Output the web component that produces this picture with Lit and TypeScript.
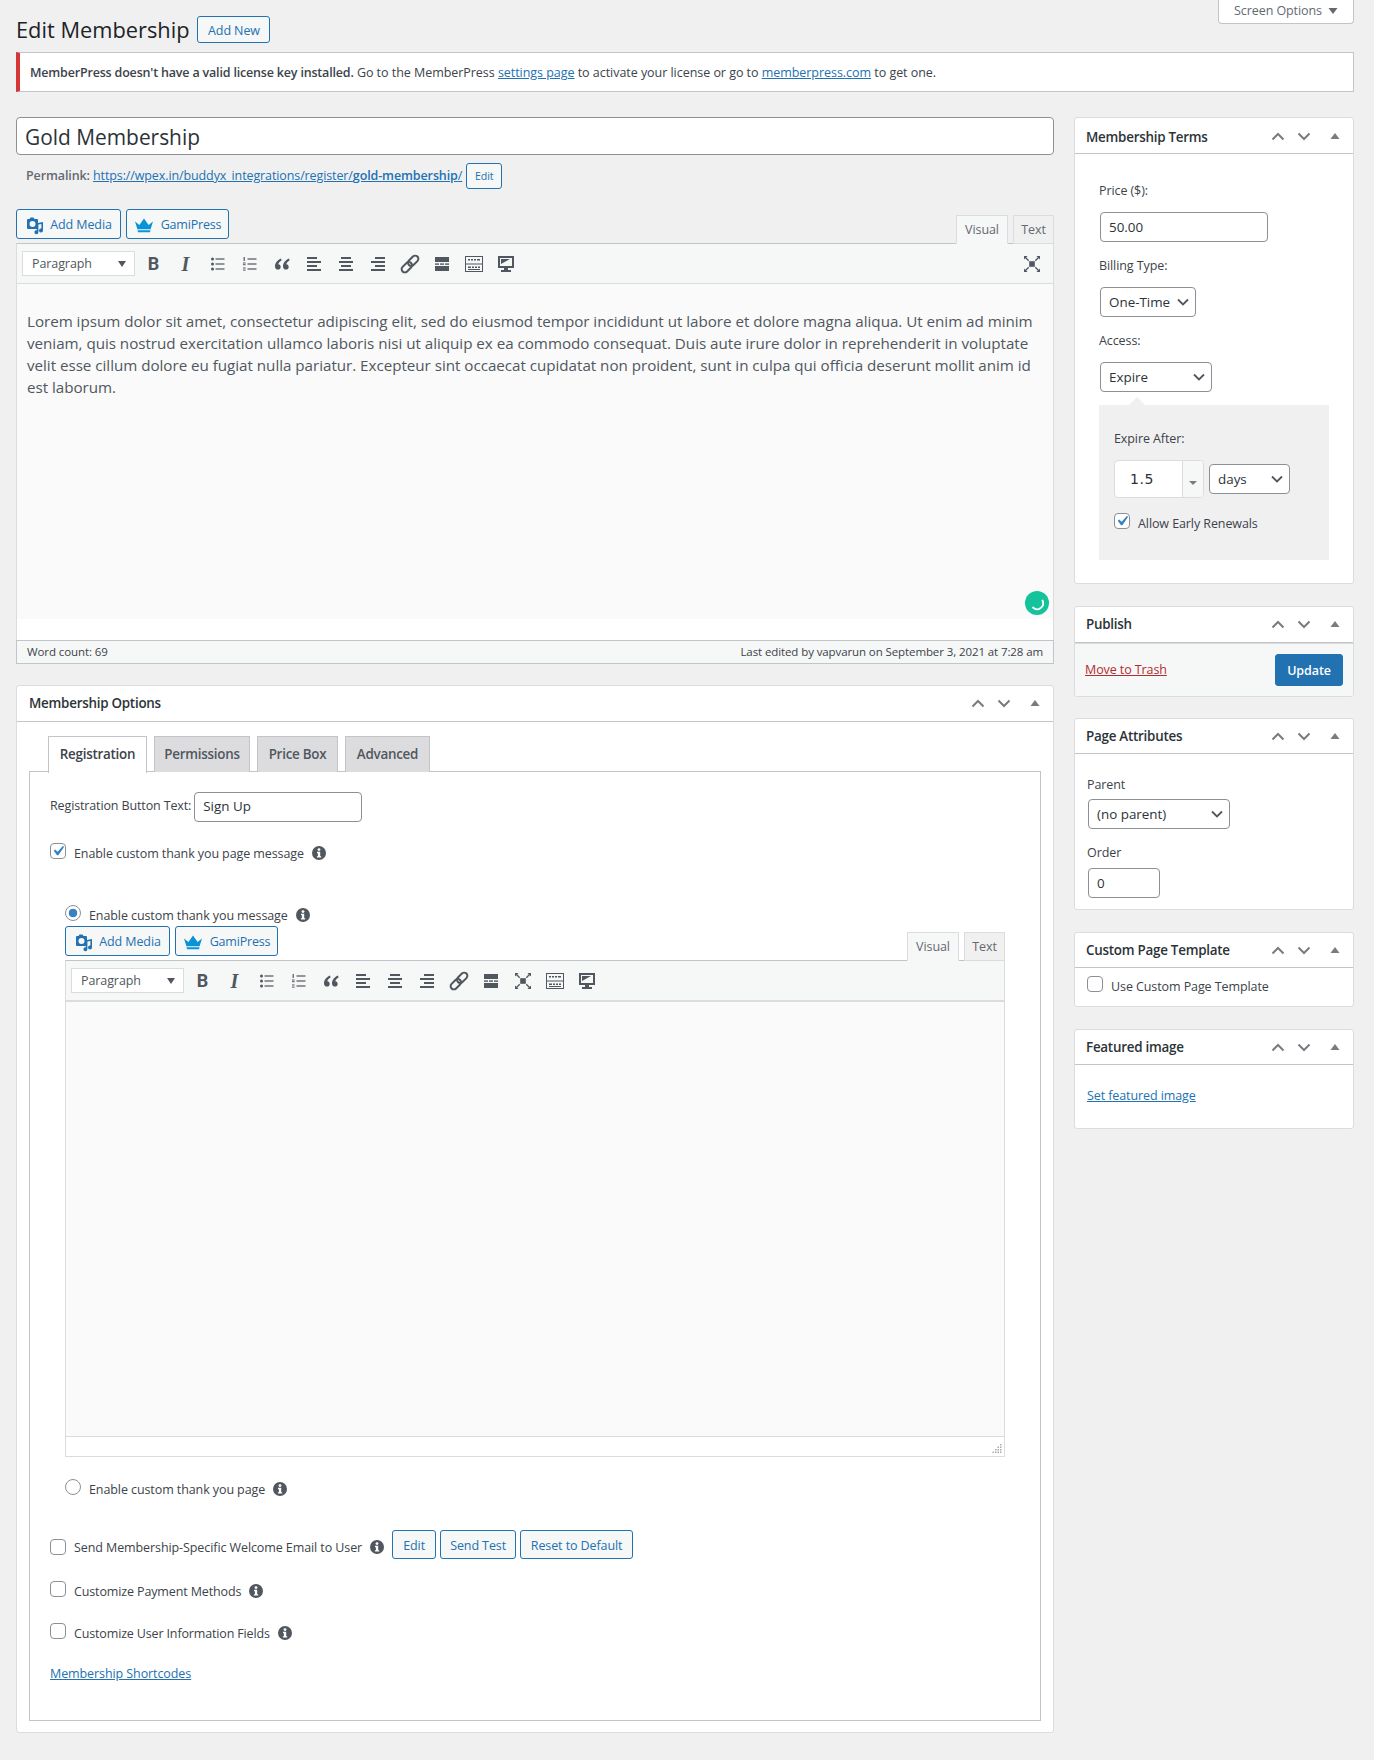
import { LitElement, html, css, svg } from "lit";
import { customElement } from "lit/decorators.js";

const LOREM =
  "Lorem ipsum dolor sit amet, consectetur adipiscing elit, sed do eiusmod tempor incididunt ut labore et dolore magna aliqua. Ut enim ad minim veniam, quis nostrud exercitation ullamco laboris nisi ut aliquip ex ea commodo consequat. Duis aute irure dolor in reprehenderit in voluptate velit esse cillum dolore eu fugiat nulla pariatur. Excepteur sint occaecat cupidatat non proident, sunt in culpa qui officia deserunt mollit anim id est laborum.";

const ic = (body: unknown, size = 20) =>
  html`<svg class="ic" width=${size} height=${size} viewBox="0 0 20 20" fill="currentColor" aria-hidden="true">${body}</svg>`;

const lines = (rows: [number, number, number][]) =>
  rows.map(([x, y, w]) => svg`<rect x=${x} y=${y} width=${w} height="2"></rect>`);

const ICONS: Record<string, unknown> = {
  bold: html`<span class="glyph b">B</span>`,
  italic: html`<span class="glyph i">I</span>`,
  ul: ic(svg`<circle cx="4.5" cy="5" r="1.5"></circle><circle cx="4.5" cy="10" r="1.5"></circle><circle cx="4.5" cy="15" r="1.5"></circle>
    <rect x="7.5" y="4.4" width="9" height="1.2"></rect><rect x="7.5" y="9.4" width="9" height="1.2"></rect><rect x="7.5" y="14.4" width="9" height="1.2"></rect>`),
  ol: ic(svg`<rect x="3.6" y="3" width="1.2" height="4"></rect><rect x="3" y="8.5" width="2.6" height="1"></rect><rect x="3" y="10.2" width="2.6" height="1"></rect><rect x="3" y="13.5" width="2.6" height="1"></rect><rect x="3" y="15.6" width="2.6" height="1"></rect>
    <rect x="7.5" y="4.4" width="9" height="1.2"></rect><rect x="7.5" y="9.4" width="9" height="1.2"></rect><rect x="7.5" y="14.4" width="9" height="1.2"></rect>`),
  quote: ic(svg`<path d="M9 4.6C5.8 6 3 8.9 3 12.4c0 2 1.3 3.2 2.9 3.2s2.8-1.2 2.8-2.7c0-1.5-1-2.6-2.4-2.7.2-1.4 1.5-2.8 3.3-3.8Z"></path><path transform="translate(8 0)" d="M9 4.6C5.8 6 3 8.9 3 12.4c0 2 1.3 3.2 2.9 3.2s2.8-1.2 2.8-2.7c0-1.5-1-2.6-2.4-2.7.2-1.4 1.5-2.8 3.3-3.8Z"></path>`),
  left: ic(lines([[3, 3, 10], [3, 7, 14], [3, 11, 10], [3, 15, 14]])),
  center: ic(lines([[5, 3, 10], [3, 7, 14], [5, 11, 10], [3, 15, 14]])),
  right: ic(lines([[7, 3, 10], [3, 7, 14], [7, 11, 10], [3, 15, 14]])),
  link: ic(svg`<g transform="rotate(-45 10 10)" fill="none" stroke="currentColor" stroke-width="2"><rect x="-0.5" y="6.8" width="12" height="6.4" rx="3.2"></rect><rect x="8.5" y="6.8" width="12" height="6.4" rx="3.2"></rect></g>`),
  more: ic(svg`<rect x="3" y="3" width="14" height="5"></rect><rect x="3" y="9.4" width="4" height="1.4"></rect><rect x="8" y="9.4" width="4" height="1.4"></rect><rect x="13" y="9.4" width="4" height="1.4"></rect><rect x="3" y="12" width="14" height="5"></rect>`),
  full: ic(svg`<rect x="7.2" y="7.2" width="5.6" height="5.6"></rect>
    <path d="M2 2h3.6L2 5.6ZM18 2v3.6L14.4 2ZM2 18v-3.6L5.6 18ZM18 18h-3.6l3.6-3.6Z"></path>
    <path d="M3.5 3.5l3.2 3.2M16.5 3.5l-3.2 3.2M3.5 16.5l3.2-3.2M16.5 16.5l-3.2-3.2" stroke="currentColor" stroke-width="1.3" fill="none"></path>`),
  kitchen: ic(svg`<path fill-rule="evenodd" d="M1 2h18v16H1ZM2 3v6.5h16V3Zm0 7.5V17h16v-6.5Z"></path>
    <path d="M4 5h2v1.5H4Zm3 0h2v1.5H7Zm3 0h2v1.5h-2Zm3 0h3v1.5h-3ZM4 12.5h3V14H4Zm4 0h2V14H8Zm3 0h2V14h-2Zm3 0h2V14h-2ZM4 15h12v1H4Z"></path>`),
  dfw: ic(svg`<path fill-rule="evenodd" d="M2 2h16v12h-6v2h3v2H5v-2h3v-2H2Zm2 2v8h12V4Zm1 1h9L5 10Z"></path>`),
};

const MEDIA_ICON = ic(svg`<path fill-rule="evenodd" d="M5.5 2.5h3L9.5 4H12a1 1 0 0 1 1 1v8a1 1 0 0 1-1 1H3a1 1 0 0 1-1-1V5a1 1 0 0 1 1-1h1.5ZM7.5 6a3 3 0 1 0 0 6 3 3 0 0 0 0-6Z"></path>
  <path d="M18 7v8.5a2 2 0 1 1-1.6-2V9l-3 .6v7.6a2 2 0 1 1-1.6-2V8.2Z"></path>`, 20);

const CROWN_ICON = html`<svg class="ic crown" width="20" height="16" viewBox="0 0 20 16" fill="currentColor" aria-hidden="true">
  <path d="M1 4.5l4.4 3.6L10 1.5l4.6 6.6L19 4.5l-2.4 7.7H3.4Z"></path><path d="M3.4 13.2h13.2l-.7 2H4.1Z"></path></svg>`;

const INFO = html`<svg class="info" width="14" height="14" viewBox="0 0 14 14" aria-hidden="true">
  <circle cx="7" cy="7" r="7" fill="#50575e"></circle><circle cx="7" cy="3.6" r="1.4" fill="#fff"></circle><path d="M5 5.8h3.2v4.4H9.2V11.6H4.9v-1.4H5.9V7.2H5Z" fill="#fff"></path></svg>`;

const HEAD_CTRLS = html`<span class="ctrls">
  <svg width="14" height="9" viewBox="0 0 14 9"><path d="M1.5 7.5 7 2l5.5 5.5" fill="none" stroke="#787c82" stroke-width="2"></path></svg>
  <svg width="14" height="9" viewBox="0 0 14 9"><path d="M1.5 1.5 7 7l5.5-5.5" fill="none" stroke="#787c82" stroke-width="2"></path></svg>
  <svg class="tri" width="10" height="6" viewBox="0 0 10 6"><path d="M5 0l4.5 6H.5Z" fill="#787c82"></path></svg>
</span>`;

@customElement("app-root")
export class AppRoot extends LitElement {
  static styles = css`
    :host {
      display: block;
      min-height: 1760px;
      background: #f0f0f1;
      color: #3c434a;
      font-family: "Open Sans", "Noto Sans", sans-serif;
      font-size: 12.5px;
      letter-spacing: -0.09px;
      line-height: 20px;
    }
    * { box-sizing: border-box; }
    a { color: #2271b1; text-decoration: underline; }
    .wrap { padding: 0 20px 0 16px; }

    .screen-links { display: flex; justify-content: flex-end; height: 0; }
    .screen-tab {
      width: 136px; height: 24px; display: flex; align-items: center; justify-content: center; gap: 6px;
      background: #fff; border: 1px solid #c3c4c7; border-top: 0; border-radius: 0 0 4px 4px; color: #646970;
      padding-bottom: 2px; flex: none;
    }
    .screen-tab svg { color: #646970; }

    .page-head { display: flex; align-items: center; padding-top: 16px; height: 43px; }
    h1 { margin: 0; font-size: 21.8px; font-weight: 400; color: #1d2327; line-height: 27px; letter-spacing: 0; }
    .btn {
      display: inline-flex; align-items: center; justify-content: center; flex: none;
      height: 30px; border: 1px solid #2271b1; border-radius: 3px; color: #2271b1; background: #f6f7f7;
      padding: 1px 0 0; text-decoration: none;
    }
    .add-new { width: 73px; height: 27px; margin-left: 8px; font-weight: 500; background: #f6f7f7; padding-top: 2px; }
    .notice {
      margin-top: 9px; height: 40px; background: #fff; border: 1px solid #c3c4c7; border-left: 4px solid #d63638;
      padding: 1px 0 0 10px; display: flex; align-items: center; white-space: pre; letter-spacing: -0.04px;
    }
    .notice b { font-weight: 600; letter-spacing: -0.18px; }

    .columns { display: grid; grid-template-columns: 1038px 280px; column-gap: 20px; margin-top: 25px; align-items: start; }

    .title {
      display: block; width: 100%; height: 38px; border: 1px solid #8c8f94; border-radius: 4px; background: #fff;
      font: 400 20.9px "Open Sans", sans-serif; letter-spacing: 0; color: #2c3338; padding: 2px 8px 0;
    }
    .permalink { display: flex; align-items: center; height: 26px; margin-top: 8px; padding-left: 10px; gap: 4px; color: #646970; letter-spacing: -0.11px; }
    .permalink b { font-weight: 600; }
    .permalink a b { color: #2271b1; }
    .small-btn { width: 36px; height: 26px; font-size: 10.6px; padding-top: 0; }

    .ed-tools { display: flex; align-items: flex-start; gap: 5px; height: 34px; }
    .media-btn { height: 30px; gap: 5px; }
    .media-btn.m { width: 105px; }
    .media-btn.g { width: 103px; gap: 7px; letter-spacing: -0.2px; }
    .crown { color: #0a93d7; }
    .ed-tabs { margin-left: auto; display: flex; gap: 5px; align-self: flex-end; height: 29px; position: relative; top: 1px; }
    .ed-tab { height: 29px; border: 1px solid #dcdcde; background: #f0f0f1; color: #646970; display: flex; align-items: center; justify-content: center; }
    .ed-tab.on { background: #f6f7f7; border-bottom-color: #f6f7f7; }
    .ed-tab.v { width: 52px; } .ed-tab.t { width: 41px; }

    .toolbar {
      display: flex; align-items: center; height: 41px; background: #f6f7f7; padding: 0 5px;
      border: 1px solid #dcdcde; border-top-color: #c3c4c7; border-bottom-color: #dcdcde;
    }
    .format {
      width: 113px; height: 25px; border: 1px solid #dcdcde; background: #fff; margin-right: 2.5px; display: flex;
      align-items: center; padding: 1px 8px 0 9px; justify-content: space-between; color: #50575e; flex: none;
    }
    .format i { width: 0; height: 0; border: 4.5px solid transparent; border-top: 6px solid #50575e; border-bottom: 0; }
    .cell { width: 32px; height: 32px; flex: none; display: flex; align-items: center; justify-content: center; color: #50575e; }
    .cell.end { margin-left: auto; }
    .glyph { font-size: 18px; line-height: 20px; letter-spacing: 0; }
    .glyph.b { font-family: Roboto, sans-serif; font-weight: 700; }
    .glyph.i { font-family: "Liberation Serif", serif; font-style: italic; font-weight: 700; font-size: 20px; }

    .content {
      height: 356px; background: #fff; border: 1px solid #dcdcde; border-width: 0 1px;
      font-size: 15.2px; line-height: 22px; color: #50575e; letter-spacing: -0.03px; position: relative;
    }
    .frame { height: 335px; background: #fafafa; padding: 26px 9px 0 10px; }
    .content p { margin: 0; }
    .grammarly { position: absolute; right: 4px; bottom: 25px; }
    .status {
      height: 24px; background: #f6f7f7; border: 1px solid #c3c4c7; display: flex;
      justify-content: space-between; align-items: center; padding: 0 10px 0 10px; font-size: 11.5px; letter-spacing: -0.1px;
    }

    .box { background: #fff; border: 1px solid #dcdcde; border-radius: 3px; }
    .box-head {
      display: flex; align-items: center; justify-content: space-between; height: 35px; padding: 0 12px 0 11px;
      border-bottom: 1px solid #c3c4c7; font-size: 13.4px; font-weight: 600; color: #2c3338; letter-spacing: -0.25px;
    }
    .ctrls { display: inline-flex; align-items: center; }
    .ctrls svg { margin-right: 12px; }
    .ctrls .tri { margin: -1px 1px 0 7px; }

    .options { margin-top: 21px; height: 1048px; }
    .options .box-head { height: 36px; padding: 0 12px 2px; }
    .options .ctrls { position: relative; top: 1px; }
    .opt-body { padding: 14px 12px 0 12px; }
    .tabs { display: flex; gap: 7px; padding-left: 19px; height: 36px; position: relative; z-index: 1; }
    .tab {
      width: 99px; height: 36px; border: 1px solid #c3c4c7; border-bottom: 0; background: #dcdcde; color: #50575e;
      display: flex; align-items: center; justify-content: center; padding-bottom: 2px; font-size: 13.4px; font-weight: 600; letter-spacing: -0.25px;
    }
    .tab.on { background: #fff; color: #3c434a; height: 37px; padding-bottom: 3px; }
    .panel { height: 950px; border: 1px solid #c3c4c7; padding: 20px 20px 0 20px; margin-top: -1px; }
    .reg-row { display: flex; align-items: center; gap: 3px; height: 30px; letter-spacing: -0.13px; }
    .reg-row label { position: relative; top: -1px; }
    .text {
      height: 30px; border: 1px solid #8c8f94; border-radius: 4px; background: #fff; padding: 0 8px 1px;
      font: 400 13.4px "Open Sans", sans-serif; letter-spacing: 0; color: #2c3338;
    }
    .reg-row .text { width: 168px; padding-bottom: 3px; }

    .check { display: flex; align-items: flex-start; height: 20px; gap: 8px; }
    .check label { line-height: 20px; margin-top: 1px; }
    .check .info { margin: 3px 0 0 0; flex: none; }
    .cb, .rd {
      appearance: none; width: 16px; height: 16px; margin: 0; background: #fff; border: 1px solid #8c8f94; flex: none;
    }
    .cb { border-radius: 4px; }
    .rd { border-radius: 50%; }
    .cb:checked {
      background: #fff url("data:image/svg+xml,%3Csvg xmlns='http://www.w3.org/2000/svg' viewBox='0 0 20 20'%3E%3Cpath d='M14.83 4.89l1.34.94-5.81 8.38H9.02L5.78 9.67l1.34-1.25 2.57 2.4z' fill='%233582c4'/%3E%3C/svg%3E") center/20px no-repeat;
    }
    .rd:checked { background: #fff radial-gradient(circle, #3582c4 0 4px, transparent 4.6px); }

    .r-enable { margin-top: 21px; }
    .nested { margin-top: 42px; padding-left: 15px; }
    .nested .ed-tools { margin-top: 1px; }
    .nested .editor2 { width: 940px; }
    .nested .toolbar { height: 42px; border-bottom: 2px solid #dcdcde; }
    .area { height: 434px; background: #fafafa; border: 1px solid #dcdcde; border-width: 0 1px; }
    .area-foot { height: 21px; background: #fff; border: 1px solid #dcdcde; display: flex; justify-content: flex-end; align-items: flex-end; padding: 0 2px 2px 0; }
    .r2 { margin-top: 22px; }
    .email { height: 29px; align-items: flex-start; margin-top: 31px; gap: 8px; }
    .email .cb { margin-top: 9px; }
    .email label { margin-top: 8px; }
    .email .info { margin-top: 10px; }
    .email .btns { display: flex; gap: 4px; margin-left: 0; }
    .email .btn { height: 29px; padding-top: 2px; }
    .email .e { width: 44px; } .email .s { width: 76px; } .email .r { width: 113px; }
    .c4 { margin-top: 22px; letter-spacing: -0.13px; }
    .c5 { margin-top: 22px; letter-spacing: -0.15px; }
    .short { margin-top: 21px; display: block; }

    .side .box { margin-top: 22px; }
    .side .box:first-child { margin-top: 0; }
    .terms { height: 467px; }
    .terms .box-head { height: 36px; padding-top: 2px; }
    .terms-body { padding: 26px 0 0 24px; }
    .lbl { display: block; height: 20px; line-height: 20px; padding-top: 1px; }
    .sel {
      appearance: none; display: block; height: 30px; margin: 0; border: 1px solid #8c8f94; border-radius: 4px;
      padding: 0 20px 1px 8px; font: 400 13.4px "Open Sans", sans-serif; letter-spacing: 0; color: #2c3338;
      background: #fff url("data:image/svg+xml,%3Csvg xmlns='http://www.w3.org/2000/svg' width='12' height='8' viewBox='0 0 12 8'%3E%3Cpath d='M1 1.5l5 5 5-5' fill='none' stroke='%2350575e' stroke-width='1.8'/%3E%3C/svg%3E") right 6px center no-repeat;
    }
    .ml { margin-left: 1px; }
    .price { width: 168px; margin-top: 12px; display: block; }
    .terms-body .lbl2 { margin-top: 13px; }
    .sel.bill { width: 96px; margin-top: 12px; }
    .sel.acc { width: 112px; margin-top: 12px; }
    .expire { position: relative; width: 230px; height: 155px; margin-top: 13px; background: #f0f0f1; padding: 23px 14px 0 15px; }
    .expire::before {
      content: ""; position: absolute; left: 30px; top: -8px; width: 0; height: 0;
      border: 8px solid transparent; border-top: 0; border-bottom-color: #f0f0f1;
    }
    .num-row { display: flex; align-items: center; gap: 5px; margin-top: 12px; height: 38px; }
    .num { display: flex; width: 90px; height: 38px; border: 1px solid #dcdcde; border-radius: 4px; background: #fff; overflow: hidden; flex: none; }
    .num input { width: 67px; border: 0; background: transparent; padding: 0 0 0 15px; font: 400 14px "DejaVu Sans", sans-serif; letter-spacing: 0.6px; color: #2c3338; outline: none; }
    .num span { flex: 1; background: #f6f7f7; border-left: 1px solid #dcdcde; display: flex; align-items: center; justify-content: center; padding-top: 8px; }
    .sel.days { width: 81px; }
    .early { margin-top: 15px; }

    .pub { height: 91px; }
    .pub .box-head { height: 36px; padding-bottom: 2px; }
    .pub .ctrls { position: relative; top: 1px; }
    .pub-foot { height: 53px; background: #f6f7f7; display: flex; align-items: center; justify-content: space-between; padding: 0 10px 0 10px; border-top: 1px solid #dcdcde; border-radius: 0 0 3px 3px; }
    .trash { color: #b32d2e; }
    .update { width: 68px; height: 32px; background: #2271b1; border-color: #2271b1; color: #fff; font-weight: 600; }

    .side .attrs { height: 192px; margin-top: 21px; }
    .attrs-body { padding: 20px 0 0 12px; }
    .sel.parent { width: 142px; margin: 5px 0 0 1px; }
    .order { display: block; width: 72px; margin: 6px 0 0 1px; }
    .attrs-body .lbl2 { margin-top: 13px; }

    .tpl { height: 75px; }
    .tpl .check { padding: 8px 0 0 12px; height: auto; }
    .feat { height: 100px; }
    .feat a { display: block; margin: 21px 0 0 12px; }
  `;

  private toolbar(order: string[], endIcon?: string) {
    return html`<div class="toolbar">
      <div class="format"><span>Paragraph</span><i></i></div>
      ${order.map((k) => html`<span class="cell">${ICONS[k]}</span>`)}
      ${endIcon ? html`<span class="cell end">${ICONS[endIcon]}</span>` : ""}
    </div>`;
  }

  private tools() {
    return html`<div class="ed-tools">
      <a class="btn media-btn m">${MEDIA_ICON}<span>Add Media</span></a>
      <a class="btn media-btn g">${CROWN_ICON}<span>GamiPress</span></a>
      <div class="ed-tabs">
        <span class="ed-tab v on">Visual</span><span class="ed-tab t">Text</span>
      </div>
    </div>`;
  }

  private head(t: string) {
    return html`<div class="box-head"><span>${t}</span>${HEAD_CTRLS}</div>`;
  }

  render() {
    const base = ["bold", "italic", "ul", "ol", "quote", "left", "center", "right", "link", "more"];
    return html`<div class="wrap">
      <div class="screen-links">
        <div class="screen-tab">
          <span>Screen Options</span>
          <svg width="10" height="6" viewBox="0 0 10 6"><path d="M.5 0h9L5 6Z" fill="currentColor"></path></svg>
        </div>
      </div>
      <div class="page-head">
        <h1>Edit Membership</h1>
        <a class="btn add-new">Add New</a>
      </div>
      <div class="notice"><b>MemberPress doesn't have a valid license key installed.</b> Go to the MemberPress <a href="#">settings page</a> to activate your license or go to <a href="#">memberpress.com</a> to get one.</div>

      <div class="columns">
        <main>
          <input class="title" .value=${"Gold Membership"} />
          <div class="permalink">
            <span><b>Permalink:</b> <a href="#">https://wpex.in/buddyx_integrations/register/<b>gold-membership</b>/</a></span>
            <a class="btn small-btn">Edit</a>
          </div>
          <div style="margin-top:20px">${this.tools()}</div>
          ${this.toolbar([...base, "kitchen", "dfw"], "full")}
          <div class="content">
            <div class="frame"><p>${LOREM}</p></div>
            <svg class="grammarly" width="24" height="24" viewBox="0 0 24 24"><circle cx="12" cy="12" r="12" fill="#15c39a"></circle><path d="M17.5 9.5a6 6 0 0 1-9.5 7" fill="none" stroke="#fff" stroke-width="1.8" stroke-linecap="round"></path></svg>
          </div>
          <div class="status"><span>Word count: 69</span><span>Last edited by vapvarun on September 3, 2021 at 7:28 am</span></div>

          <section class="box options">
            <div class="box-head"><span>Membership Options</span>${HEAD_CTRLS}</div>
            <div class="opt-body">
              <div class="tabs">
                <span class="tab on">Registration</span>
                <span class="tab" style="width:96px">Permissions</span>
                <span class="tab" style="width:81px">Price Box</span>
                <span class="tab" style="width:85px">Advanced</span>
              </div>
              <div class="panel">
                <div class="reg-row"><label>Registration Button Text:</label><input class="text" .value=${"Sign Up"} /></div>
                <div class="check r-enable"><input type="checkbox" class="cb" checked /><label>Enable custom thank you page message</label>${INFO}</div>
                <div class="nested">
                  <div class="check"><input type="radio" class="rd" name="ty" checked /><label>Enable custom thank you message</label>${INFO}</div>
                  <div class="editor2">
                    ${this.tools()}
                    ${this.toolbar([...base, "full", "kitchen", "dfw"])}
                    <div class="area"></div>
                    <div class="area-foot">
                      <svg width="10" height="10" viewBox="0 0 10 10" fill="#a7aaad"><rect x="8" y="0" width="1.5" height="1.5"></rect><rect x="5.5" y="2.5" width="1.5" height="1.5"></rect><rect x="8" y="2.5" width="1.5" height="1.5"></rect><rect x="3" y="5" width="1.5" height="1.5"></rect><rect x="5.5" y="5" width="1.5" height="1.5"></rect><rect x="8" y="5" width="1.5" height="1.5"></rect><rect x="0.5" y="7.5" width="1.5" height="1.5"></rect><rect x="3" y="7.5" width="1.5" height="1.5"></rect><rect x="5.5" y="7.5" width="1.5" height="1.5"></rect><rect x="8" y="7.5" width="1.5" height="1.5"></rect></svg>
                    </div>
                  </div>
                  <div class="check r2"><input type="radio" class="rd" name="ty" /><label>Enable custom thank you page</label>${INFO}</div>
                </div>
                <div class="check email">
                  <input type="checkbox" class="cb" /><label>Send Membership-Specific Welcome Email to User</label>${INFO}
                  <span class="btns"><a class="btn e">Edit</a><a class="btn s">Send Test</a><a class="btn r">Reset to Default</a></span>
                </div>
                <div class="check c4"><input type="checkbox" class="cb" /><label>Customize Payment Methods</label>${INFO}</div>
                <div class="check c5"><input type="checkbox" class="cb" /><label>Customize User Information Fields</label>${INFO}</div>
                <a class="short" href="#">Membership Shortcodes</a>
              </div>
            </div>
          </section>
        </main>

        <aside class="side">
          <section class="box terms">
            ${this.head("Membership Terms")}
            <div class="terms-body">
              <label class="lbl">Price ($):</label>
              <input class="text price ml" .value=${"50.00"} />
              <label class="lbl lbl2">Billing Type:</label>
              <select class="sel bill ml"><option>One-Time</option></select>
              <label class="lbl lbl2">Access:</label>
              <select class="sel acc ml"><option>Expire</option></select>
              <div class="expire">
                <label class="lbl">Expire After:</label>
                <div class="num-row">
                  <div class="num"><input .value=${"1.5"} /><span><svg width="8" height="4" viewBox="0 0 8 4"><path d="M0 0h8L4 4Z" fill="#787c82"></path></svg></span></div>
                  <select class="sel days"><option>days</option></select>
                </div>
                <div class="check early"><input type="checkbox" class="cb" checked /><label>Allow Early Renewals</label></div>
              </div>
            </div>
          </section>

          <section class="box pub">
            ${this.head("Publish")}
            <div class="pub-foot"><a class="trash" href="#">Move to Trash</a><a class="btn update">Update</a></div>
          </section>

          <section class="box attrs">
            ${this.head("Page Attributes")}
            <div class="attrs-body">
              <label class="lbl">Parent</label>
              <select class="sel parent"><option>(no parent)</option></select>
              <label class="lbl lbl2">Order</label>
              <input class="text order" .value=${"0"} />
            </div>
          </section>

          <section class="box tpl">
            ${this.head("Custom Page Template")}
            <div class="check"><input type="checkbox" class="cb" /><label>Use Custom Page Template</label></div>
          </section>

          <section class="box feat">
            ${this.head("Featured image")}
            <a href="#">Set featured image</a>
          </section>
        </aside>
      </div>
    </div>`;
  }
}
